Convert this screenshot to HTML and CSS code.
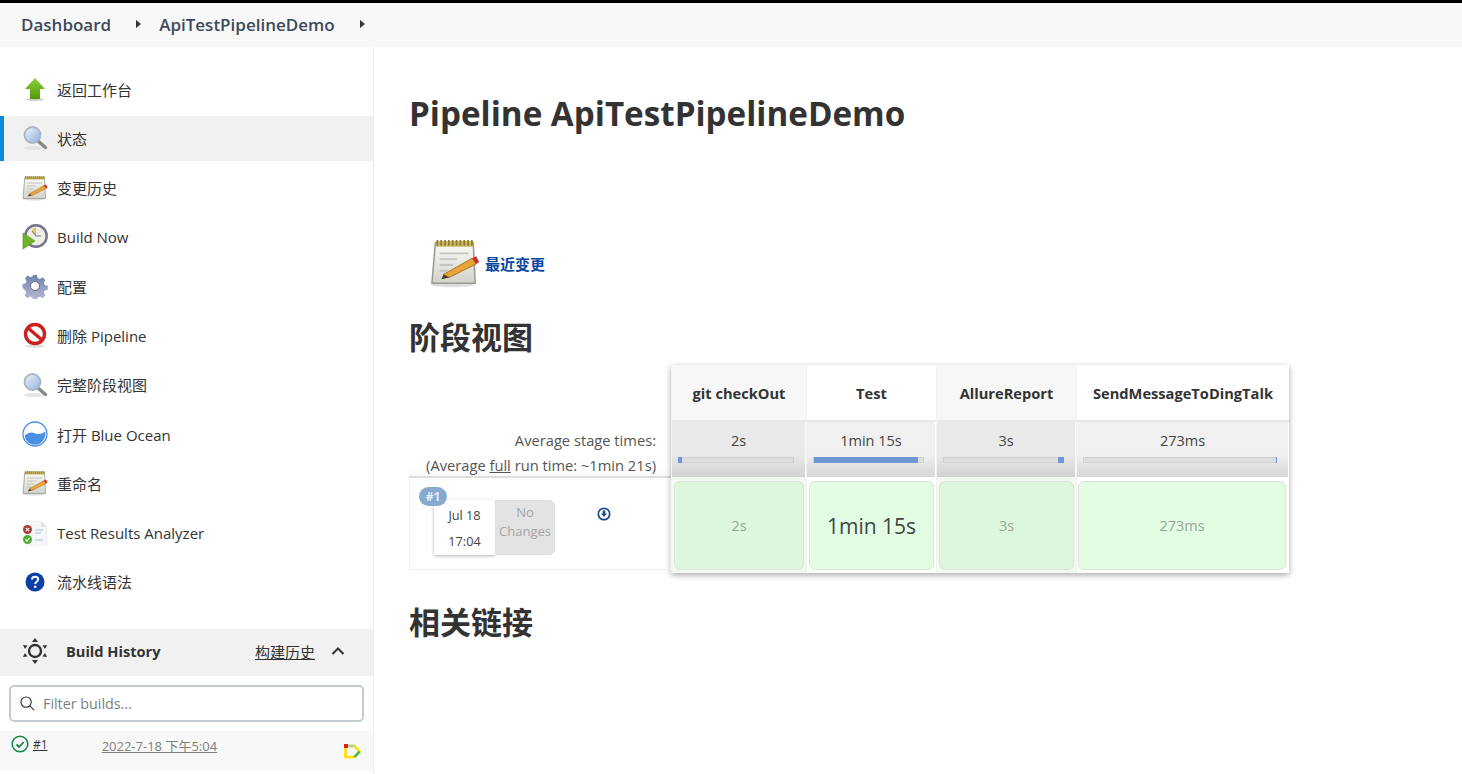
FILE: index.html
```html
<!DOCTYPE html>
<html lang="zh">
<head>
<meta charset="utf-8">
<title>ApiTestPipelineDemo</title>
<link rel="stylesheet" href="styles.css">
</head>
<body>
<svg class="defs" width="0" height="0" aria-hidden="true">
  <defs>
    <linearGradient id="lens" x1="0" y1="0" x2="1" y2="1"><stop offset="0" stop-color="#eef4fb"/><stop offset="1" stop-color="#8fb2dd"/></linearGradient>
    <linearGradient id="paper" x1="0" y1="0" x2="0" y2="1"><stop offset="0" stop-color="#fbfbf8"/><stop offset="1" stop-color="#d2d2cc"/></linearGradient>
    <linearGradient id="gear" x1="0" y1="0" x2="0" y2="1"><stop offset="0" stop-color="#6f82ae"/><stop offset="1" stop-color="#bcbcd2"/></linearGradient>
    <linearGradient id="arrow" x1="0" y1="0" x2="0" y2="1"><stop offset="0" stop-color="#8fce3c"/><stop offset="1" stop-color="#4e9a06"/></linearGradient>
    <symbol id="i-up" viewBox="0 0 26 26">
      <ellipse cx="13" cy="23.500" rx="9" ry="1.500" fill="#ccc"/>
      <path d="M13 2 23 13H18V23H8V13H3Z" fill="url(#arrow)"/>
    </symbol>
    <symbol id="i-search" viewBox="0 0 26 26">
      <ellipse cx="12" cy="23" rx="10" ry="2" fill="#e4e4e4"/>
      <path d="M16 16 23.500 22.500" stroke="#8a8a85" stroke-width="3.500" stroke-linecap="round"/>
      <circle cx="10.500" cy="10" r="8" fill="url(#lens)" stroke="#aab4c2" stroke-width="1.800"/>
    </symbol>
    <symbol id="i-note" viewBox="0 0 26 26">
      <ellipse cx="12" cy="24.300" rx="11" ry="1.300" fill="#ddd"/>
      <path d="M2.800 2.500H22.500L23.500 23.500H1Z" fill="url(#paper)" stroke="#9a9a94" stroke-width=".8"/>
      <path d="M3.200 1.500H22.300L22.600 4.500H3Z" fill="#c9b86a"/>
      <path d="M3.800 1V4M5.800 1V4M7.800 1V4M9.800 1V4M11.800 1V4M13.800 1V4M15.800 1V4M17.800 1V4M19.800 1V4M21.800 1V4" stroke="#8f7d2a" stroke-width=".9"/>
      <path d="M5 8H20M5 11H14M5 14H12M5 17H9" stroke="#c5c5c0" stroke-width="1"/>
      <path d="M7 19 22 10.500 24 13.500 10 20.500Z" fill="#e8a33a" stroke="#a8731d" stroke-width=".5"/>
      <path d="M7 19 10 20.500 6 21.500Z" fill="#4b3a20"/>
      <path d="M22 10.500 24 9.500 25.500 12.500 24 13.500Z" fill="#cf2a2a"/>
    </symbol>
    <symbol id="i-build" viewBox="0 0 26 26">
      <circle cx="14" cy="12" r="10.700" fill="#f0eee8" stroke="#77708e" stroke-width="2.400"/>
      <path d="M14 3 10 5.500 14 12Z" fill="#e3c65d"/>
      <path d="M14 12 10 7M14 12 19 12" stroke="#777" stroke-width="1.200"/>
      <path d="M1 9 13 17 1 25Z" fill="#6fb52a" stroke="#4d8c12" stroke-width=".6"/>
    </symbol>
    <symbol id="i-gear" viewBox="0 0 26 26">
      <path d="M10.800.8h4.400l.8 3.400 2.500 1 3-1.800 3.100 3.100-1.800 3 1 2.500 3.400.8v4.400l-3.400.8-1 2.500 1.800 3-3.100 3.100-3-1.800-2.500 1-.8 3.400h-4.400l-.8-3.400-2.500-1-3 1.800-3.100-3.100 1.800-3-1-2.500L-.8 15.200v-4.400l3.400-.8 1-2.500-1.800-3 3.100-3.100 3 1.800 2.500-1Z" transform="translate(1.300 1.300) scale(.9)" fill="url(#gear)"/>
      <circle cx="13" cy="13" r="4.500" fill="#fff" stroke="#6d6d8e" stroke-width="1"/>
    </symbol>
    <symbol id="i-no" viewBox="0 0 26 26">
      <ellipse cx="13" cy="24.200" rx="10" ry="1.500" fill="#ddd"/>
      <circle cx="13" cy="12" r="9.500" fill="#fff" stroke="#cc1f1f" stroke-width="3.400"/>
      <path d="M6 6 20 18" stroke="#cc1f1f" stroke-width="3.400"/>
    </symbol>
    <symbol id="i-ocean" viewBox="0 0 26 26">
      <circle cx="13" cy="13" r="12" fill="#fff" stroke="#4a90e2" stroke-width="1.300"/>
      <path d="M2.800 14.500C7 11 10 11 13 12.500 16 13.500 20 13 23.300 10.500 24.300 17 20 23.800 13 23.800 6 23.800 3 18 2.800 14.500Z" fill="#4a90e2"/>
    </symbol>
    <symbol id="i-test" viewBox="0 0 26 26">
      <path d="M4 1H19L25 7V26H4Z" fill="#f4f6f8" stroke="#e4e7ea" stroke-width=".6"/>
      <path d="M19 1V7H25Z" fill="#dce2e8"/>
      <path d="M13 10H21M13 13H19M13 20H21" stroke="#a9c2d8" stroke-width="1"/>
      <circle cx="5.500" cy="9.500" r="4.500" fill="#b03a3a"/>
      <path d="M3.800 7.800 7.200 11.200M7.200 7.800 3.800 11.200" stroke="#fff" stroke-width="1.100"/>
      <circle cx="5.500" cy="19.500" r="4.500" fill="#4fae2f"/>
      <path d="M3.500 19.500 5 21 7.500 17.800" stroke="#fff" stroke-width="1.200" fill="none"/>
    </symbol>
    <symbol id="i-help" viewBox="0 0 20 20">
      <circle cx="10" cy="10" r="9.500" fill="#0b3fa8"/>
      <path d="M7 7.600C7 5.800 8.300 4.800 10 4.800 11.900 4.800 13.200 5.900 13.200 7.500 13.200 9.800 10.200 9.800 10.200 12" stroke="#fff" stroke-width="2" fill="none"/>
      <circle cx="10.200" cy="14.800" r="1.300" fill="#fff"/>
    </symbol>
  </defs>
</svg>

<header class="crumbs">
  <a class="crumb">Dashboard</a><span class="caret"></span>
  <a class="crumb">ApiTestPipelineDemo</a><span class="caret"></span>
</header>

<div class="layout">
  <aside class="side">
    <nav class="tasks">
      <a class="task"><svg class="ico"><use href="#i-up"/></svg><span>返回工作台</span></a>
      <a class="task active"><svg class="ico"><use href="#i-search"/></svg><span>状态</span></a>
      <a class="task"><svg class="ico"><use href="#i-note"/></svg><span>变更历史</span></a>
      <a class="task"><svg class="ico"><use href="#i-build"/></svg><span>Build Now</span></a>
      <a class="task"><svg class="ico"><use href="#i-gear"/></svg><span>配置</span></a>
      <a class="task"><svg class="ico"><use href="#i-no"/></svg><span>删除 Pipeline</span></a>
      <a class="task"><svg class="ico"><use href="#i-search"/></svg><span>完整阶段视图</span></a>
      <a class="task"><svg class="ico"><use href="#i-ocean"/></svg><span>打开 Blue Ocean</span></a>
      <a class="task"><svg class="ico"><use href="#i-note"/></svg><span>重命名</span></a>
      <a class="task"><svg class="ico"><use href="#i-test"/></svg><span>Test Results Analyzer</span></a>
      <a class="task"><svg class="ico ico-help"><use href="#i-help"/></svg><span>流水线语法</span></a>
    </nav>

    <section class="history">
      <div class="hist-head">
        <svg class="sun" viewBox="0 0 24 26">
          <circle cx="12" cy="13" r="6" fill="none" stroke="#333" stroke-width="2.400"/>
          <path d="M12 0 15 4H9ZM12 26 9 22H15ZM0 7 4.500 7.500 2 11ZM24 7 22 11 19.500 7.500ZM0 19 2 15 4.500 18.500ZM24 19 19.500 18.500 22 15Z" fill="#333"/>
        </svg>
        <strong class="hist-title">Build History</strong>
        <a class="hist-link">构建历史</a>
        <svg class="chev" viewBox="0 0 14 10"><path d="M1.500 8 7 2.500 12.500 8" fill="none" stroke="#333" stroke-width="2"/></svg>
      </div>
      <div class="filter">
        <svg class="mag" viewBox="0 0 16 16"><circle cx="6.500" cy="6.500" r="5.500" fill="none" stroke="#333" stroke-width="1.200"/><path d="M10.500 10.500 15 15" stroke="#333" stroke-width="1.200"/></svg>
        <span class="filter-ph">Filter builds...</span>
      </div>
      <div class="hist-row">
        <svg class="ok" viewBox="0 0 18 18"><circle cx="9" cy="9" r="7.800" fill="none" stroke="#138347" stroke-width="1.500"/><path d="M5.500 9.500 8 12 12.800 7" fill="none" stroke="#138347" stroke-width="1.800"/></svg>
        <a class="hist-num">#1</a>
        <a class="hist-date">2022-7-18 下午5:04</a>
        <svg class="dt" viewBox="0 0 17 15"><path d="M1.500 2H10.500L15.500 7.500 10.500 13H1.500Z" fill="none" stroke="#ffdf00" stroke-width="2.600"/><path d="M4 2H10.500" stroke="#a9d69a" stroke-width="2.600"/><path d="M10.500 13 15.500 7.500" stroke="#43b649" stroke-width="2.600"/><path d="M0 0H4V4H0Z" fill="#e02020"/></svg>
      </div>
    </section>
  </aside>

  <main class="main">
    <h1 class="title">Pipeline ApiTestPipelineDemo</h1>

    <div class="changes">
      <svg class="note-lg"><use href="#i-note"/></svg>
      <a class="changes-link">最近变更</a>
    </div>

    <h2 class="section">阶段视图</h2>

    <div class="stage">
      <div class="stage-left">
        <div class="avg">
          <div>Average stage times:</div>
          <div>(Average <u>full</u> run time: ~1min 21s)</div>
        </div>
        <div class="run">
          <span class="badge">#1</span>
          <div class="date"><span>Jul 18</span><span>17:04</span></div>
          <div class="nochg">No Changes</div>
          <svg class="dl" viewBox="0 0 14 14"><circle cx="7" cy="7" r="5.700" fill="none" stroke="#1d4a8f" stroke-width="1.700"/><path d="M5.700 3.500H8.300V6.500H10L7 10 4 6.500H5.700Z" fill="#1d4a8f"/></svg>
        </div>
      </div>

      <div class="grid">
        <div class="col col-a c1">
          <div class="head">git checkOut</div>
          <div class="time"><span>2s</span><div class="bar"><i class="fill f1"></i></div></div>
          <div class="cellwrap"><div class="cell dark">2s</div></div>
        </div>
        <div class="col c2">
          <div class="head">Test</div>
          <div class="time"><span>1min 15s</span><div class="bar"><i class="fill f2"></i></div></div>
          <div class="cellwrap"><div class="cell big">1min 15s</div></div>
        </div>
        <div class="col col-a c3">
          <div class="head">AllureReport</div>
          <div class="time"><span>3s</span><div class="bar"><i class="fill f3"></i></div></div>
          <div class="cellwrap"><div class="cell dark">3s</div></div>
        </div>
        <div class="col c4">
          <div class="head">SendMessageToDingTalk</div>
          <div class="time"><span>273ms</span><div class="bar"><i class="fill f4"></i></div></div>
          <div class="cellwrap"><div class="cell">273ms</div></div>
        </div>
      </div>
    </div>

    <h2 class="section related">相关链接</h2>
  </main>
</div>
</body>
</html>
```

FILE: styles.css
```css
* { box-sizing: border-box; }
html, body { height: 100%; }
body {
  margin: 0;
  height: 774px;
  overflow: hidden;
  background: #fff;
  color: #333;
  border-top: 3px solid #000;
  font-family: "Open Sans", "Noto Sans", "Noto Sans CJK SC", sans-serif;
  font-size: 14px;
}
.defs { position: absolute; }

.crumbs {
  height: 44px;
  background: #f8f8f8;
  display: flex;
  align-items: center;
  padding: 0 0 2px 21px;
}
.crumb {
  font-size: 17px;
  font-weight: 600;
  color: #3c4a5a;
}
.caret {
  width: 0; height: 0;
  margin: 0 18px 0 25px;
  border-left: 5px solid #333;
  border-top: 4px solid transparent;
  border-bottom: 4px solid transparent;
}

.layout { display: flex; height: 727px; }
.side {
  width: 374px;
  flex: none;
  border-right: 1px solid #eee;
  padding-top: 19.500px;
}
.tasks { display: flex; flex-direction: column; gap: 4.300px; }
.task {
  display: flex;
  align-items: center;
  height: 45px;
  padding-left: 22px;
  color: #333;
  font-size: 15px;
}
.task span { margin-left: 9px; }
.task.active { background: #f1f1f1; box-shadow: inset 4px 0 0 #0b8bd8; }
.ico { width: 26px; height: 26px; flex: none; }
.ico-help { width: 20px; height: 20px; margin: 0 3px; }

.history { margin-top: 24.500px; }
.hist-head {
  height: 47px;
  background: #f1f1f1;
  display: flex;
  align-items: center;
  padding: 0 28px 2px 23px;
}
.sun { width: 24px; height: 26px; flex: none; }
.hist-title { margin-left: 19px; font-size: 14.600px; font-weight: 700; }
.hist-link { margin-left: auto; text-decoration: underline; font-size: 15px; }
.chev { width: 14px; height: 10px; margin-left: 16px; }
.filter {
  margin: 9px 9px 0 9px;
  height: 37px;
  border: 2px solid #c3ccd1;
  border-radius: 5px;
  display: flex;
  align-items: center;
  padding-left: 9px;
}
.mag { width: 15px; height: 15px; }
.filter-ph { margin-left: 8px; padding-top: 1px; color: #7a7f85; font-size: 14.300px; }
.hist-row {
  position: relative;
  margin-top: 9px;
  height: 40px;
  background: #f8f8f8;
  display: flex;
  align-items: flex-start;
  padding: 5px 0 0 11px;
  font-size: 13px;
}
.ok { width: 18px; height: 18px; flex: none; margin-top: -1px; }
.hist-num { margin-left: 4px; text-decoration: underline; color: #333; font-size: 12px; line-height: 18px; }
.hist-date { margin-left: 54px; text-decoration: underline; color: #808080; }
.dt { width: 17px; height: 15px; margin-left: auto; margin-right: 12px; margin-top: 8px; }

.main { flex: 1; padding-left: 35px; }
.title {
  margin: 44px 0 0;
  font-size: 33.200px;
  line-height: 46px;
  font-weight: 700;
  color: #333;
}
.changes {
  margin-top: 100px;
  margin-left: 21px;
  display: flex;
  align-items: center;
  height: 52px;
}
.note-lg { width: 50px; height: 50px; flex: none; }
.changes-link { margin-left: 5px; font-weight: 700; font-size: 15px; color: #0b47a1; }
.section {
  margin: 26px 0 0;
  font-size: 31px;
  line-height: 44px;
  font-weight: 700;
  color: #333;
}

.stage { display: flex; margin-top: 6px; height: 208px; }
.stage-left { width: 262px; flex: none; display: flex; flex-direction: column; padding-top: 56px; }
.avg {
  height: 57px;
  padding-right: 15px;
  text-align: right;
  font-size: 14.700px;
  line-height: 24.500px;
  padding-top: 7px;
  color: #555;
  border-bottom: 2px solid #ddd;
  background: linear-gradient(#fff 80%, #fafafa);
}
.run {
  position: relative;
  height: 92px;
  border: 1px solid #eee;
  border-top: 0;
  display: flex;
  align-items: flex-start;
  padding: 22px 0 0 24px;
}
.badge {
  position: absolute;
  left: 9px;
  top: 9px;
  width: 28px;
  height: 19px;
  border-radius: 10px;
  background: #85a9cf;
  color: #e6eef6;
  font-size: 12px;
  font-weight: 700;
  text-align: center;
  line-height: 19px;
}
.date {
  width: 61px;
  height: 55px;
  background: #fff;
  box-shadow: 0 1px 3px rgba(0,0,0,.3);
  display: flex;
  flex-direction: column;
  align-items: center;
  font-size: 12.700px;
  color: #444;
  padding-top: 6px;
  gap: 8px;
  line-height: 18px;
}
.nochg {
  width: 60px;
  height: 55px;
  background: #e3e3e3;
  border: 1px solid #ddd;
  border-radius: 0 6px 6px 0;
  color: #a5a5a5;
  font-size: 13px;
  line-height: 19px;
  text-align: center;
  padding-top: 2px;
}
.dl { width: 14px; height: 14px; margin-left: 42px; margin-top: 7px; }

.grid {
  display: flex;
  background: #fff;
  box-shadow: 0 2px 6px rgba(0,0,0,.35);
  height: 208px;
}
.col { flex: none; display: flex; flex-direction: column; border-left: 1px solid #f2f2f2; }
.c1 { width: 135px; }
.c2 { width: 130px; }
.c3 { width: 140px; }
.c4 { width: 213px; }
.head {
  height: 57px;
  display: flex;
  align-items: center;
  justify-content: center;
  font-weight: 700;
  font-size: 14.650px;
  color: #333;
  border-bottom: 2px solid #e8e8e8;
}
.col-a .head { background: #f7f7f7; }
.time {
  height: 55px;
  text-align: center;
  font-size: 14.500px;
  color: #444;
  padding-top: 9px;
  line-height: 20px;
  background: linear-gradient(#f0f0f0 60%, #d6d6d6);
  border-right: 1px solid #fff;
}
.col-a .time { background: linear-gradient(#e9e9e9 60%, #d2d2d2); }
.bar {
  margin: 6px 11px 0 6px;
  height: 6px;
  background: #dedede;
  border: 1px solid #d0d0d0;
  position: relative;
}
.fill { position: absolute; top: -1px; bottom: -1px; background: #6f97d3; }
.f1 { left: -1px; width: 4px; }
.f2 { left: 0; right: 5px; }
.f3 { right: -1px; width: 6px; }
.f4 { right: -1px; width: 1px; }
.cellwrap { flex: 1; padding: 4px 2px 3px; background: #f3f8f1; }
.c2 .cellwrap, .c4 .cellwrap { background: #fff; }
.c4 .cellwrap { padding: 4px 3px 3px 1px; }
.cell {
  height: 100%;
  border: 1px solid #d8e4d6;
  border-radius: 6px;
  background: #e2fde2;
  display: flex;
  align-items: center;
  justify-content: center;
  font-size: 14.500px;
  color: #9aa59a;
}
.cell.dark { background: #ddf7dd; }
.cell.big { font-size: 21px; color: #444; }

.related { margin-top: 27px; }
```
